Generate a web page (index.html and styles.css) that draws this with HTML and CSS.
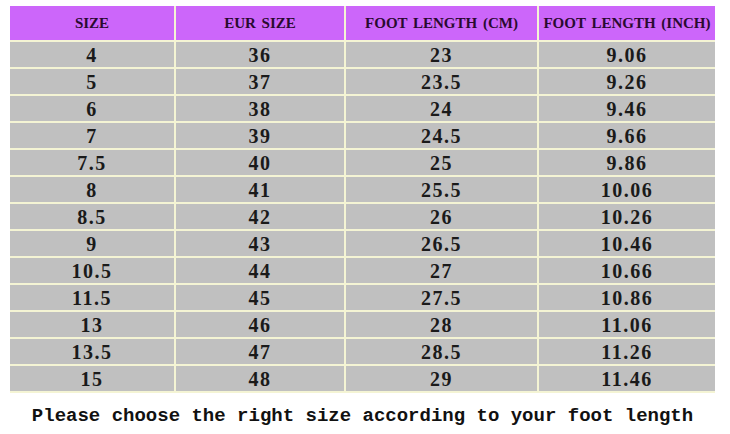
FILE: index.html
```html
<!DOCTYPE html>
<html>
<head>
<meta charset="utf-8">
<link rel="stylesheet" href="styles.css">
</head>
<body>
<div class="page">
<table class="chart">
<colgroup><col class="c1"><col class="c2"><col class="c3"><col class="c4"></colgroup>
<thead>
<tr><th>SIZE</th><th>EUR SIZE</th><th>FOOT LENGTH (CM)</th><th>FOOT LENGTH (INCH)</th></tr>
</thead>
<tbody>
<tr><td>4</td><td>36</td><td>23</td><td>9.06</td></tr>
<tr><td>5</td><td>37</td><td>23.5</td><td>9.26</td></tr>
<tr><td>6</td><td>38</td><td>24</td><td>9.46</td></tr>
<tr><td>7</td><td>39</td><td>24.5</td><td>9.66</td></tr>
<tr><td>7.5</td><td>40</td><td>25</td><td>9.86</td></tr>
<tr><td>8</td><td>41</td><td>25.5</td><td>10.06</td></tr>
<tr><td>8.5</td><td>42</td><td>26</td><td>10.26</td></tr>
<tr><td>9</td><td>43</td><td>26.5</td><td>10.46</td></tr>
<tr><td>10.5</td><td>44</td><td>27</td><td>10.66</td></tr>
<tr><td>11.5</td><td>45</td><td>27.5</td><td>10.86</td></tr>
<tr><td>13</td><td>46</td><td>28</td><td>11.06</td></tr>
<tr><td>13.5</td><td>47</td><td>28.5</td><td>11.26</td></tr>
<tr><td>15</td><td>48</td><td>29</td><td>11.46</td></tr>
</tbody>
</table>
<p class="note">Please choose the right size according to your foot length</p>
</div>
</body>
</html>
```
FILE: styles.css
```css
html, body {
  margin: 0;
  padding: 0;
  background: #ffffff;
}
.page {
  width: 730px;
  height: 434px;
  padding: 6px 0 0 10px;
  box-sizing: border-box;
  overflow: hidden;
}
.chart {
  width: 705px;
  border-collapse: collapse;
  table-layout: fixed;
  font-family: "Liberation Serif", "DejaVu Serif", serif;
  font-weight: bold;
  color: #1a1a1a;
}
.c1 { width: 165px; }
.c2 { width: 170px; }
.c3 { width: 193px; }
.c4 { width: 177px; }
.chart th,
.chart td {
  padding: 0;
  text-align: center;
  white-space: nowrap;
  border-right: 2px solid #f4f4d4;
  border-bottom: 2px solid #f4f4d4;
}
.chart th:last-child,
.chart td:last-child {
  border-right: none;
}
.chart th {
  background: #cc66fa;
  color: #2a0a30;
  height: 34px;
  line-height: 34px;
  font-size: 15px;
  letter-spacing: 0;
  word-spacing: 2px;
}
.chart td {
  background: #c0c0c0;
  height: 23px;
  padding-top: 2px;
  font-size: 20px;
  line-height: 23px;
  letter-spacing: 1.5px;
}
.note {
  margin: 11px 0 0 0;
  width: 705px;
  text-align: center;
  font-family: "Liberation Mono", "DejaVu Sans Mono", monospace;
  font-weight: bold;
  font-size: 19px;
  color: #111111;
  line-height: 24px;
}
```
